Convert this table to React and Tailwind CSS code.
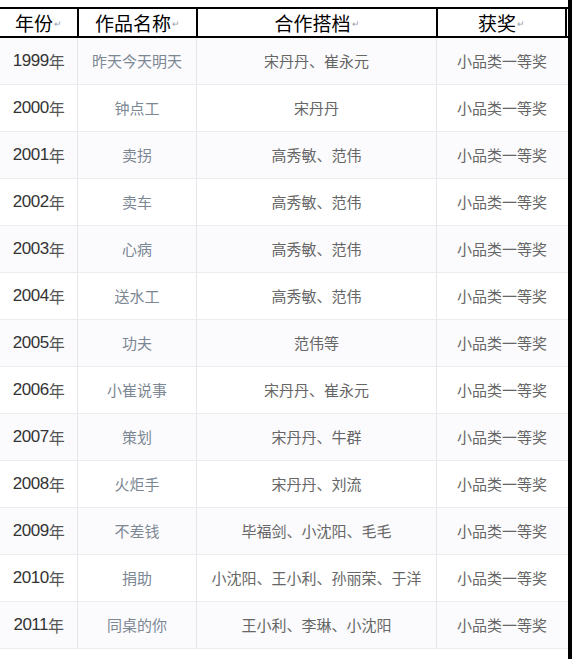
import React from "react";

const rows = [
  ["1999年", "昨天今天明天", "宋丹丹、崔永元"],
  ["2000年", "钟点工", "宋丹丹"],
  ["2001年", "卖拐", "高秀敏、范伟"],
  ["2002年", "卖车", "高秀敏、范伟"],
  ["2003年", "心病", "高秀敏、范伟"],
  ["2004年", "送水工", "高秀敏、范伟"],
  ["2005年", "功夫", "范伟等"],
  ["2006年", "小崔说事", "宋丹丹、崔永元"],
  ["2007年", "策划", "宋丹丹、牛群"],
  ["2008年", "火炬手", "宋丹丹、刘流"],
  ["2009年", "不差钱", "毕福剑、小沈阳、毛毛"],
  ["2010年", "捐助", "小沈阳、王小利、孙丽荣、于洋"],
  ["2011年", "同桌的你", "王小利、李琳、小沈阳"],
];

const cjk = { fontFamily: '"Noto Sans CJK SC", sans-serif' };
const cols = "grid grid-cols-[77px_119px_240px_131px]";

const Mark = () => <span className="text-[9px] text-gray-400 align-middle ml-px">↵</span>;

export default function App() {
  return (
    <div className="flex w-[572px] h-[659px] bg-white overflow-hidden" style={cjk}>
      <div className="w-[568px] pt-[7px]">
        <div className={`${cols} h-[31px] border-t-2 border-b-2 border-black text-[19px] text-black`}>
          <div className="flex items-center justify-center">年份<Mark /></div>
          <div className="flex items-center justify-center border-l-2 border-black">作品名称<Mark /></div>
          <div className="flex items-center justify-center border-l-2 border-black">合作搭档<Mark /></div>
          <div className="flex items-center justify-center border-l-2 border-r-2 border-black">获奖<Mark /></div>
        </div>
        {rows.map((r, i) => (
          <div key={r[0]} className={`${cols} h-[47px] border-b border-[#ececef] text-[15px] ${i % 2 ? "bg-white" : "bg-[#fbfbfd]"}`}>
            <div
              className="flex items-center justify-center text-[17px] text-[#333] tracking-[-0.5px]"
              style={{ fontFamily: '"Liberation Sans", "Noto Sans CJK SC", sans-serif' }}
            >
              {r[0].slice(0, 4)}
              <span className="text-[16px] text-[#555]" style={cjk}>年</span>
            </div>
            <div className="flex items-center justify-center border-l border-[#e6e6ea] text-[#7c8794]">{r[1]}</div>
            <div className="flex items-center justify-center border-l border-[#e6e6ea] text-[#666]">{r[2]}</div>
            <div className="flex items-center justify-center border-l border-[#e6e6ea] text-[#666]">小品类一等奖</div>
          </div>
        ))}
      </div>
      <div className="w-[4px] h-full bg-black" />
    </div>
  );
}
